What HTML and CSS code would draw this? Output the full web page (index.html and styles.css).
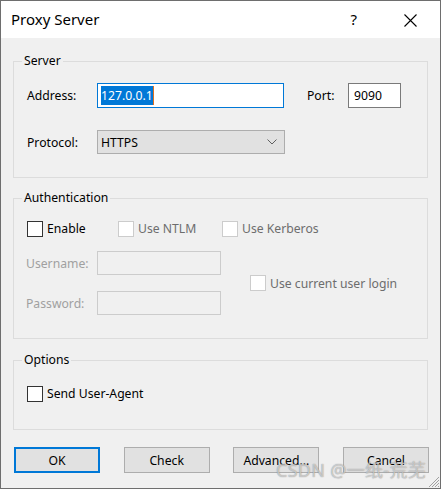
FILE: index.html
```html
<!DOCTYPE html>
<html>
<head>
<meta charset="utf-8">
<link rel="stylesheet" href="styles.css">
</head>
<body>
<div class="window">
  <div class="titlebar">
    <span class="title">Proxy Server</span>
    <span class="help">?</span>
    <span class="close">
      <svg width="13" height="13" viewBox="0 0 13 13"><path d="M0.5 0.5 L12.5 12.5 M12.5 0.5 L0.5 12.5" stroke="#000" stroke-width="1.1" fill="none"/></svg>
    </span>
  </div>
  <div class="body">
    <div class="group group-server">
      <div class="group-title">Server</div>
      <div class="row row-address">
        <span class="label">Address:</span>
        <div class="input input-address focused"><span class="sel">127.0.0.1</span><span class="caret"></span></div>
        <span class="label label-port">Port:</span>
        <div class="input input-port">9090</div>
      </div>
      <div class="row row-protocol">
        <span class="label">Protocol:</span>
        <div class="select">
          <span>HTTPS</span>
          <svg width="10" height="6" viewBox="0 0 10 6"><path d="M0.5 0.5 L5 5 L9.5 0.5" stroke="#606060" stroke-width="1" fill="none"/></svg>
        </div>
      </div>
    </div>

    <div class="group group-auth">
      <div class="group-title">Authentication</div>
      <div class="row row-checks">
        <label class="check check-enable"><span class="box"></span><span>Enable</span></label>
        <label class="check check-ntlm disabled"><span class="box"></span><span>Use NTLM</span></label>
        <label class="check disabled"><span class="box"></span><span>Use Kerberos</span></label>
      </div>
      <div class="row row-creds">
        <div class="creds">
          <div class="cred-row">
            <span class="label dim">Username:</span>
            <div class="input input-dis"></div>
          </div>
          <div class="cred-row cred-row-pass">
            <span class="label dim">Password:</span>
            <div class="input input-dis"></div>
          </div>
        </div>
        <label class="check check-login disabled"><span class="box"></span><span>Use current user login</span></label>
      </div>
    </div>

    <div class="group group-options">
      <div class="group-title">Options</div>
      <div class="row row-ua">
        <label class="check"><span class="box"></span><span>Send User-Agent</span></label>
      </div>
    </div>

    <div class="buttons">
      <div class="btn btn-default">OK</div>
      <div class="btn">Check</div>
      <div class="btn">Advanced...</div>
      <div class="btn">Cancel</div>
    </div>
  </div>
  <div class="watermark">CSDN @一纸-荒芜</div>
  <svg class="grip" width="12" height="12" viewBox="0 0 12 12"><path d="M11 1 L1 11 M11 4 L4 11 M11 7 L7 11 M11 10 L10 11" stroke="#a0a0a0" stroke-width="1" fill="none"/></svg>
</div>
</body>
</html>
```

FILE: styles.css
```css
html, body {
  margin: 0;
  padding: 0;
  background: #f0f0f0;
}

.window {
  position: relative;
  width: 441px;
  height: 489px;
  box-sizing: border-box;
  border: 1px solid #6e6e6e;
  background: #f0f0f0;
  font-family: "Noto Sans", "Open Sans", sans-serif;
  font-size: 12.2px;
  color: #000;
  display: flex;
  flex-direction: column;
  overflow: hidden;
}

.titlebar {
  height: 37px;
  background: #fff;
  display: flex;
  align-items: center;
  flex-shrink: 0;
}

.title {
  font-size: 15px;
  margin-left: 10px;
  margin-top: -1px;
  flex: 1;
}

.help {
  font-size: 15px;
  margin-right: 47px;
  margin-top: -1px;
}

.close {
  display: flex;
  margin-right: 23px;
  margin-top: 1px;
}

.body {
  flex: 1;
  display: flex;
  flex-direction: column;
}

.group {
  margin: 0 12px;
  border: 1px solid #dcdcdc;
  padding: 0 12px 0 13px;
}

.group-title {
  width: fit-content;
  height: 16px;
  line-height: 16px;
  margin-top: -9px;
  margin-left: -5px;
  padding: 0 2px;
  background: #f0f0f0;
}

.group-server {
  margin-top: 23px;
  padding-bottom: 23px;
}

.group-auth {
  margin-top: 20px;
  padding-bottom: 23px;
}

.group-options {
  margin-top: 21px;
  padding-bottom: 27px;
}

.row {
  display: flex;
  align-items: center;
}

.label {
  width: 70px;
  flex-shrink: 0;
}

.input {
  box-sizing: border-box;
  height: 25px;
  border: 1px solid #7a7a7a;
  background: #fff;
  display: flex;
  align-items: center;
  padding-left: 3px;
}

.row-address {
  margin-top: 14px;
}

.input-address {
  width: 187px;
}

.focused {
  border-color: #0078d7;
}

.sel {
  background: #0078d7;
  color: #fff;
  line-height: 19px;
}

.caret {
  width: 1px;
  height: 19px;
  background: #e07020;
}

.label-port {
  width: 41px;
  margin-left: 23px;
}

.input-port {
  width: 53px;
  padding-left: 5px;
}

.row-protocol {
  margin-top: 22px;
}

.select {
  box-sizing: border-box;
  width: 188px;
  height: 24px;
  border: 1px solid #adadad;
  background: #e1e1e1;
  display: flex;
  align-items: center;
  justify-content: space-between;
  padding: 0 7px 0 3px;
}

.check {
  display: flex;
  align-items: center;
  flex-shrink: 0;
}

.box {
  box-sizing: border-box;
  width: 16px;
  height: 16px;
  border: 1px solid #333;
  background: #fff;
  margin-right: 4px;
}

.check.disabled {
  color: #6d6d6d;
}

.check.disabled .box {
  border-color: #cccccc;
}

.row-checks {
  margin-top: 14px;
}

.check-enable {
  width: 91px;
}

.check-ntlm {
  width: 104px;
}

.row-creds {
  margin-top: 14px;
}

.creds {
  display: flex;
  flex-direction: column;
}

.cred-row {
  display: flex;
  align-items: center;
}

.cred-row-pass {
  margin-top: 16px;
}

.dim {
  color: #a0a0a0;
  margin-left: -1px;
  width: 71px;
}

.input-dis {
  width: 124px;
  height: 24px;
  border-color: #cccccc;
  background: #f0f0f0;
}

.check-login {
  margin-left: 29px;
}

.row-ua {
  margin-top: 17px;
}

.buttons {
  margin-top: 17px;
  padding: 0 11px 0 13px;
  display: flex;
  justify-content: space-between;
}

.btn {
  box-sizing: border-box;
  width: 86px;
  height: 26px;
  border: 1px solid #adadad;
  background: #e1e1e1;
  display: flex;
  align-items: center;
  justify-content: center;
}

.btn-default {
  border: 2px solid #0078d7;
}

.watermark {
  position: absolute;
  right: 14px;
  bottom: 8px;
  font-family: "Noto Sans", "Noto Sans CJK SC", sans-serif;
  font-size: 18px;
  line-height: 20px;
  color: rgba(255, 255, 255, 0.55);
  text-shadow: 0 0 1px rgba(90, 90, 90, 0.8);
  letter-spacing: 0.3px;
}

.grip {
  position: absolute;
  right: 0;
  bottom: 0;
}
```
